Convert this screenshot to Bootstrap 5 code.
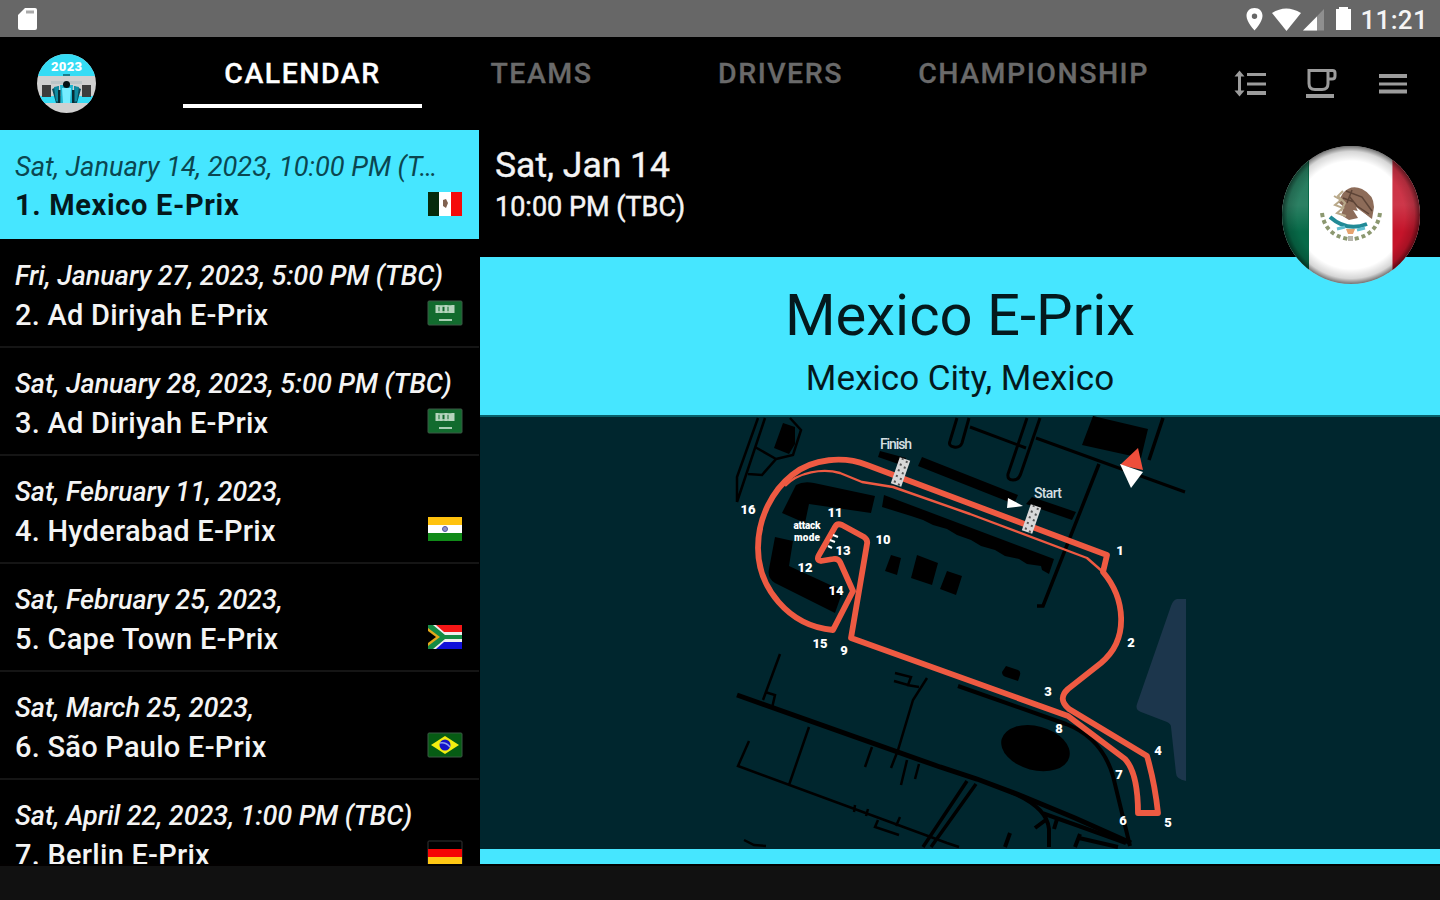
<!DOCTYPE html>
<html lang="en">
<head>
  <meta charset="UTF-8">
  <title>E-Prix Calendar 2023</title>
  <link href="https://cdn.jsdelivr.net/npm/bootstrap@5.3.2/dist/css/bootstrap.min.css" rel="stylesheet">
  <style>
    body {
      width: 1440px;
      height: 900px;
      background-color: #000;
      color: #f4f4f4;
      font-family: Roboto, "Liberation Sans", sans-serif;
    }
    .status-bar {
      height: 37px;
      background-color: #676767;
      padding: 0 12px 0 18px;
    }
    .clock {
      font-size: 26px;
      font-weight: 500;
      line-height: 37px;
      letter-spacing: 0.3px;
      margin-left: 7px;
      padding-top: 3px;
    }
    .top-bar { height: 93px; padding-left: 37px; }
    .app-logo { margin-top: 17px; }
    .tool-icons { margin-left: 67px; margin-top: 28px; }
    .main-tabs { width: 984px; margin-left: 86px; }
    .main-tabs .nav-link {
      flex: none;
      width: 239px;
      height: 71px;
      padding: 16px 0 0;
      color: #6a6a6a;
      font-size: 28.5px;
      font-weight: 500;
      line-height: 42px;
      letter-spacing: 1.5px;
      text-align: center;
      white-space: nowrap;
      border-radius: 0;
      -webkit-text-stroke: 0.3px;
    }
    .main-tabs .nav-link.wide-tab { width: 267px; }
    .main-tabs .nav-link.active {
      color: #fff;
      border-bottom: 4px solid #fff;
    }
    .main-area { height: 734px; }
    .race-list { width: 479px; border-radius: 0; flex: none; }
    .race-list .list-group-item {
      height: 108px;
      padding: 18px 16px 0 15px;
      background-color: #000;
      color: #f4f4f4;
      border: 0;
      border-bottom: 2px solid #151515;
      flex: none;
    }
    .race-list .list-group-item.active {
      height: 110px;
      padding-top: 19px;
      background-color: #46e6ff;
      color: #04191d;
      border-color: #000;
      border-bottom-width: 1px;
      margin: 0;
    }
    .race-date {
      font-size: 27px;
      font-style: italic;
      font-weight: 500;
      line-height: 37px;
      width: 440px;
      letter-spacing: -0.05px;
    }
    .race-name {
      font-size: 29px;
      font-weight: 500;
      line-height: 41px;
      letter-spacing: 0.25px;
    }
    .active .race-date {
      color: #0b4650;
      width: 426px;
      font-weight: 400;
      font-size: 27.2px;
      line-height: 36px;
      letter-spacing: 0;
    }
    .active .race-name { font-weight: 700; letter-spacing: 0.65px; }
    .race-flag { width: 36px; height: 26px; flex: none; margin-top: -5px; }
    .active .race-flag { margin-top: -3px; }
    .detail { width: 961px; padding-left: 1px; }
    .detail-head { height: 127px; padding: 13px 0 0 15px; }
    .detail-day { font-size: 35.5px; line-height: 44px; -webkit-text-stroke: 0.4px; }
    .detail-time { font-size: 27px; line-height: 40px; -webkit-text-stroke: 0.5px; }
    .big-flag { top: 12px; right: 17px; width: 144px; height: 144px; }
    .race-banner {
      height: 158px;
      background-color: #46e6ff;
      color: #04191d;
      padding-top: 24px;
    }
    .banner-title { font-size: 58px; line-height: 68px; }
    .banner-place { font-size: 35px; line-height: 60px; }
    .track-map { height: 434px; background-color: #00262e; }
    .bottom-line { height: 15px; background-color: #46e6ff; }
    .nav-strip { height: 36px; background-color: #111; border-top: 2px solid #020000; }
    .map-num { font: 900 13px Roboto, sans-serif; fill: #fff; text-anchor: middle; }
    .map-tiny { font-size: 10px; }
    .map-word { font: 500 14px Roboto, sans-serif; fill: #d5dfe1; }
  </style>
</head>
<body class="overflow-hidden">

<!-- Status bar -->
<div class="status-bar d-flex align-items-center">
  <svg width="20" height="24" viewBox="0 0 20 24"><path d="M7 1h10q2 0 2 2v18q0 2-2 2H2q-2 0-2-2V8z" fill="#fff"/><path d="M8 5h8" stroke="#aaa" stroke-width="3"/></svg>
  <svg class="ms-auto" width="110" height="26" viewBox="1244 5 110 26" fill="#fff">
    <path fill-rule="evenodd" d="M1254.500 7c-5 0-8 3.500-8 8 0 6 8 14.500 8 14.500s8-8.500 8-14.500c0-4.500-3-8-8-8zm0 5.500a2.700 2.700 0 1 1 0 5.400a2.700 2.700 0 0 1 0-5.400z"/>
    <path d="M1272 12q14-9 29 0l-14.500 18z"/>
    <path d="M1324 8v21.500h-21z" fill="#8f8f8f"/>
    <path d="M1317 15.500v14h-14z"/>
    <path d="M1339 6h9v2h3v21h-15V8h3z"/>
  </svg>
  <span class="clock">11:21</span>
</div>

<!-- Top bar -->
<nav class="top-bar d-flex">
  <svg class="app-logo flex-shrink-0" width="60" height="60" viewBox="0 0 60 60">
    <defs><clipPath id="logoClip"><circle cx="29.500" cy="29.500" r="29.500"/></clipPath></defs>
    <g clip-path="url(#logoClip)">
      <path d="M0 0h60v60H0z" fill="#d0d0d0"/>
      <path d="M0 0h60v22H0z" fill="#35dcf5"/>
      <path d="M0 42h60v7H0z" fill="#35dcf5"/>
      <path d="M14 27h31v3H14z" fill="#bcc4c6"/>
      <path d="M5 31h9v12H5zM45 31h9v12h-9z" fill="#3d3d3d"/>
      <path d="M15 35l7-3v17h-3zM44 35l-7-3v17h3z" fill="#0a4c5c"/>
      <path d="M17 33l5-1v16l-3-1zM42 33l-5-1v16l3-1z" fill="#108aa0"/>
      <path d="M23 31h13l-1 18H24z" fill="#1eb6d0"/>
      <path d="M25 34h9l-1 15h-7z" fill="#75edff"/>
      <path d="M21 36h2.500v13h-2.500zM35 36h2.500v13h-2.500z" fill="#072b34"/>
      <circle cx="29.500" cy="30.500" r="3.500" fill="#021114"/>
      <path d="M26 20h7v2h-7z" fill="#167f90"/>
    </g>
    <text x="29.500" y="17" font-family="Roboto" font-weight="900" font-size="13" fill="#fff" text-anchor="middle" textLength="31">2023</text>
  </svg>
  <div class="main-tabs nav flex-nowrap flex-shrink-0">
    <a class="nav-link active">CALENDAR</a>
    <a class="nav-link">TEAMS</a>
    <a class="nav-link">DRIVERS</a>
    <a class="nav-link wide-tab">CHAMPIONSHIP</a>
  </div>
  <svg class="tool-icons flex-shrink-0" width="176" height="38" viewBox="1234 65 176 38" fill="none" stroke="#9c9c9c" stroke-width="3">
    <path d="M1239.500 73v21" />
    <path d="M1234.500 76.500l5-6 5 6zM1234.500 90.500l5 6 5-6z" fill="#9c9c9c" stroke="none"/>
    <path d="M1247 74.500h19M1247 84h19"/>
    <path d="M1247 93h19" stroke-width="4"/>
    <path d="M1309 70.500h19v13q0 6-6 6h-7q-6 0-6-6zM1328 70.500h4.500q2.500 0 2.500 2.500v3q0 3-3 3h-4"/>
    <path d="M1306 96h28M1379 76h28" stroke-width="4"/>
    <path d="M1379 84h28"/>
    <path d="M1379 91.500h28" stroke-width="4"/>
  </svg>
</nav>

<div class="main-area d-flex overflow-hidden">
  <!-- Race list -->
  <div class="race-list list-group overflow-hidden">
    <div class="list-group-item active">
      <div class="race-date text-truncate">Sat, January 14, 2023, 10:00 PM (T…</div>
      <div class="d-flex justify-content-between align-items-center">
        <span class="race-name">1. Mexico E-Prix</span>
        <svg class="race-flag" viewBox="0 0 36 26"><path d="M1 1h34v24H1z" fill="#fff"/><path d="M1 1h11v24H1z" fill="#062b0c"/><path d="M24 1h11v24H24z" fill="#f50a0a"/><path d="M16 9l3-1 2 4-2 5-3-2z" fill="#80614f"/></svg>
      </div>
    </div>
    <div class="list-group-item">
      <div class="race-date text-nowrap">Fri, January 27, 2023, 5:00 PM (TBC)</div>
      <div class="d-flex justify-content-between align-items-center">
        <span class="race-name">2. Ad Diriyah E-Prix</span>
        <svg class="race-flag" viewBox="0 0 36 26"><rect x="1" y="1" width="34" height="24" rx="1" fill="#126b2e" stroke="#3b5944"/><path d="M9 6h18M9 12h18" stroke="#8fbf9c" stroke-width="2"/><path d="M10 5v8M14 6v7M19 5v8M23 6v7M26 5v8" stroke="#b5d4bd" stroke-width="3"/><path d="M12 20h13" stroke="#a9cfb4" stroke-width="2"/></svg>
      </div>
    </div>
    <div class="list-group-item">
      <div class="race-date text-nowrap">Sat, January 28, 2023, 5:00 PM (TBC)</div>
      <div class="d-flex justify-content-between align-items-center">
        <span class="race-name">3. Ad Diriyah E-Prix</span>
        <svg class="race-flag" viewBox="0 0 36 26"><rect x="1" y="1" width="34" height="24" rx="1" fill="#126b2e" stroke="#3b5944"/><path d="M9 6h18M9 12h18" stroke="#8fbf9c" stroke-width="2"/><path d="M10 5v8M14 6v7M19 5v8M23 6v7M26 5v8" stroke="#b5d4bd" stroke-width="3"/><path d="M12 20h13" stroke="#a9cfb4" stroke-width="2"/></svg>
      </div>
    </div>
    <div class="list-group-item">
      <div class="race-date text-nowrap">Sat, February 11, 2023,</div>
      <div class="d-flex justify-content-between align-items-center">
        <span class="race-name">4. Hyderabad E-Prix</span>
        <svg class="race-flag" viewBox="0 0 36 26"><path d="M1 1h34v24H1z" fill="#fff"/><path d="M1 1h34v8H1z" fill="#ffc20e"/><path d="M1 17h34v8H1z" fill="#108a18"/><circle cx="18" cy="13" r="2.500" fill="#9292c8" stroke="#5555a0"/></svg>
      </div>
    </div>
    <div class="list-group-item">
      <div class="race-date text-nowrap">Sat, February 25, 2023,</div>
      <div class="d-flex justify-content-between align-items-center">
        <span class="race-name">5. Cape Town E-Prix</span>
        <svg class="race-flag" viewBox="0 0 36 26"><path d="M1 1h34v24H1z" fill="#eee"/><path d="M9 1h26v7H17z" fill="#f51616"/><path d="M9 25h26v-7H17z" fill="#1010d8"/><path d="M1 1h5l12 10h17v4H18L6 25H1z" fill="#148a45"/><path d="M1 4l12 9L1 22z" fill="#e5a91b"/><path d="M1 7l8 6-8 6z" fill="#000"/></svg>
      </div>
    </div>
    <div class="list-group-item">
      <div class="race-date text-nowrap">Sat, March 25, 2023,</div>
      <div class="d-flex justify-content-between align-items-center">
        <span class="race-name">6. São Paulo E-Prix</span>
        <svg class="race-flag" viewBox="0 0 36 26"><rect x="1" y="1" width="34" height="24" rx="1" fill="#065c14" stroke="#3b5944"/><path d="M4 13L18 4l14 9-14 9z" fill="#f4ee10"/><circle cx="18" cy="13" r="5.500" fill="#1414c8"/><path d="M13 11q6-1 10 4" stroke="#8c9ff0" stroke-width="1.500" fill="none"/></svg>
      </div>
    </div>
    <div class="list-group-item">
      <div class="race-date text-nowrap">Sat, April 22, 2023, 1:00 PM (TBC)</div>
      <div class="d-flex justify-content-between align-items-center">
        <span class="race-name">7. Berlin E-Prix</span>
        <svg class="race-flag" viewBox="0 0 36 26"><rect x="1" y="1" width="34" height="24" rx="1" fill="#000" stroke="#333"/><path d="M1 9h34v8H1z" fill="#f50505"/><path d="M1 17h34v8H1z" fill="#ffc814"/></svg>
      </div>
    </div>
  </div>

  <!-- Race detail -->
  <div class="detail position-relative">
    <div class="detail-head">
      <div class="detail-day">Sat, Jan 14</div>
      <div class="detail-time">10:00 PM (TBC)</div>
    </div>
    <div class="race-banner text-center">
      <div class="banner-title">Mexico E-Prix</div>
      <div class="banner-place">Mexico City, Mexico</div>
    </div>
    <svg class="track-map d-block" width="960" height="434" viewBox="480 415 960 434">
      <path d="M480 416h960" stroke="#08606a" stroke-width="2"/>
      <path d="M1186 599h-9q-4 1-6 7l-34 98q-2 6 4 8l26 10q4 2 4 5l5 46q0 6 10 8z" fill="#1c364c"/>

      <!-- buildings -->
      <g fill="#000">
        <path d="M783 423l12 4v17l-6 10-15-6zM796 485q7-4 18-2l61 13-4 17-62-9-4 19-23-10zM775 537l18 4-4 25 50 23 3 4-7 20-60-30q-8-5-6-14z"/>
        <path d="M884 495l170 64-5 15-7-4-1-4-14-2-8-5-14-3-10-6-14-4-10-6-14-5-10-6-14-4-10-5-12-4-29-9zM922 457l96 38-4 9-96-38zM880 451l26 7-2 8-26-9zM1032 497l44 15-4 8-46-16z"/>
        <path d="M891 555l10 3-4 17-12-4zM917 555l21 8-6 22-21-7zM947 571l15 5-6 19-16-6zM1093 416l55 13-7 29-59-13z"/>
        <path d="M1006 666l12 4q3 1 2 5l-2 6-12-4q-4-1-4-5z"/>
        <ellipse cx="1035.500" cy="748" rx="35" ry="22" transform="rotate(15 1035 748)"/>
      </g>

      <!-- streets -->
      <g fill="none" stroke="#000" stroke-width="2.500">
        <path d="M758 418l-21 59v25M765 418l-28 84M755 447l21 12-14 16-14-1M776 459l17-4 8-25-11-12"/>
        <path d="M957 418l-7 23q-2 5 4 6 6 1 8-4l7-25M1027 418l-19 56q-1 6 5 6 6 0 8-7l19-55M970 427l56 21M1036 438l149 54" stroke-width="3"/>
        <path d="M1163 418l-14 42M1099 464l-56 142h-6" stroke-width="3.500"/>
        <path d="M780 654l-17 46M765 692l10 3-3 13M927 678l-14 22-15 50-7 18M872 747l-7 20M907 760l-6 25M919 764l-4 15M895 673l16 4-3 8-14-4M907 685l12 2"/>
        <path d="M737 695l203 72 37 12 45 17 53 22 56 25" stroke-width="5"/>
        <path d="M809 727l-20 58M749 741l-11 25 209 77 12 4M854 812l1-7M866 816l2-7M878 820l-3 7 24 8M896 826l4-9M744 840l10 5 12 1"/>
        <path d="M967 781l-44 66M976 784l-45 63" stroke-width="3.500"/>
        <path d="M1011 792q36 15 38 37v18M1042 813l34 12 50 18M1035 828l12-9M1010 833l-5 14M1054 829l3-10M1080 834l-5 13M1079 838l39 9" stroke-width="4"/>
        <path d="M958 686l108 38q36 14 47 52l17 70" stroke-width="4"/>
      </g>

      <!-- circuit -->
      <g fill="none" stroke="#ee5a42" stroke-linejoin="round">
        <path d="M1107 555L867 465c-23-9-54-7-75 10-19 15-34 42-34 73 0 39 30 78 75 82l20-39-13-29q-2-4-7-3l-12 2q-5-1-2-6l16-28q2-4 7-2l22 12q4 3 3 7l-16 94 217 78 57 43q13 14 13 54h20q-3-29-11-57L1069 709q-12-10-1-20l33-26c29-24 24-65 2-91z" stroke-width="5.800"/>
        <path d="M785 486c13-14 38-18 55-13l22 9 31 5 77 27 117 44 16 14" stroke-width="2.400"/>
      </g>

      <!-- start and finish lines -->
      <path d="M905 459l-9 26M1036 506l-9 26" stroke="#d8d8d8" stroke-width="11"/>
      <path d="M903 458l-9 26M907 461l-9 26M1034 505l-9 26M1038 508l-9 26" stroke="#555" stroke-width="2" stroke-dasharray="2 4"/>
      <path d="M1008 498l15 8-16 2z" fill="#fff"/>
      <path d="M1138 448l5 22-23-5z" fill="#ee4e3b"/>
      <path d="M1120 464l23 8-12 16z" fill="#fff"/>
      <path d="M833 535l5 2M830 540l5 2M828 546l4 2" stroke="#fff" stroke-width="2"/>
      <text class="map-word" x="880" y="449" textLength="32">Finish</text>
      <text class="map-word" x="1034" y="498" textLength="28">Start</text>
      <text class="map-num map-tiny" x="807" y="529" textLength="27">attack</text>
      <text class="map-num map-tiny" x="807" y="541" textLength="26">mode</text>
      <g class="map-num">
        <text x="1120" y="555">1</text>
        <text x="1131" y="647">2</text>
        <text x="1048" y="696">3</text>
        <text x="1158" y="755">4</text>
        <text x="1168" y="827">5</text>
        <text x="1123" y="825">6</text>
        <text x="1119" y="779">7</text>
        <text x="1059" y="733">8</text>
        <text x="844" y="655">9</text>
        <text x="883" y="544">10</text>
        <text x="835" y="517">11</text>
        <text x="805" y="572">12</text>
        <text x="843" y="555">13</text>
        <text x="836" y="595">14</text>
        <text x="820" y="648">15</text>
        <text x="748" y="514">16</text>
      </g>
    </svg>
    <div class="bottom-line"></div>

    <svg class="big-flag position-absolute" viewBox="1279 142 144 144">
      <defs>
        <clipPath id="ballClip"><circle cx="1351" cy="215" r="69"/></clipPath>
        <radialGradient id="ballShade">
          <stop offset="0.780" stop-color="#000" stop-opacity="0"/>
          <stop offset="0.920" stop-color="#000" stop-opacity="0.160"/>
          <stop offset="1" stop-color="#000" stop-opacity="0.550"/>
        </radialGradient>
        <linearGradient id="sideGloss" x1="0" y1="0" x2="0" y2="1">
          <stop offset="0" stop-color="#fff" stop-opacity="0.100"/>
          <stop offset="0.700" stop-color="#fff" stop-opacity="0.150"/>
          <stop offset="1" stop-color="#fff" stop-opacity="0"/>
        </linearGradient>
      </defs>
      <g clip-path="url(#ballClip)">
        <path d="M1279 142h144v144h-144z" fill="#fff"/>
        <path d="M1279 142h30v144h-30z" fill="#076a48"/>
        <path d="M1392.500 142h31v144h-31z" fill="#c5142a"/>
        <path d="M1282 142h26v90h-26zM1393 142h30v90h-30z" fill="url(#sideGloss)"/>
      </g>
      <path d="M1343 193q8-9 19-4 12 6 12 18l-2 12-10-7-9-2 5 8-9 2-8-5 3-8-6-5z" fill="#8d6c59"/>
      <path d="M1346 191l16 6 10 14M1349 196l8 10 12 8M1343 198l11 4M1352 190l-5 13" stroke="#5d4437" stroke-width="1.500" fill="none"/>
      <path d="M1356 207l13 10-10-3z" fill="#fff"/>
      <path d="M1334 196l7 4-6 5 8 3-6 5 9 3M1343 191l-5 5 7 7-4 8" fill="none" stroke="#b9a98a" stroke-width="2"/>
      <path d="M1330 217q17 15 37 7" fill="none" stroke="#218a96" stroke-width="4"/>
      <path d="M1337 229l8-2M1357 230l8-2" stroke="#62bfd0" stroke-width="3"/>
      <path d="M1346 229h9l-2 5h-5z" fill="#e6a36f"/>
      <path d="M1322 213q3 22 26 26M1380 213q-3 22-26 26" fill="none" stroke="#8c9870" stroke-width="4" stroke-dasharray="4 3"/>
      <path d="M1348 236h5v5h-5z" fill="#b6b6ad"/>
      <circle cx="1351" cy="215" r="69" fill="url(#ballShade)"/>
    </svg>
  </div>
</div>

<div class="nav-strip"></div>

<script src="https://cdn.jsdelivr.net/npm/bootstrap@5.3.2/dist/js/bootstrap.bundle.min.js"></script>
</body>
</html>
